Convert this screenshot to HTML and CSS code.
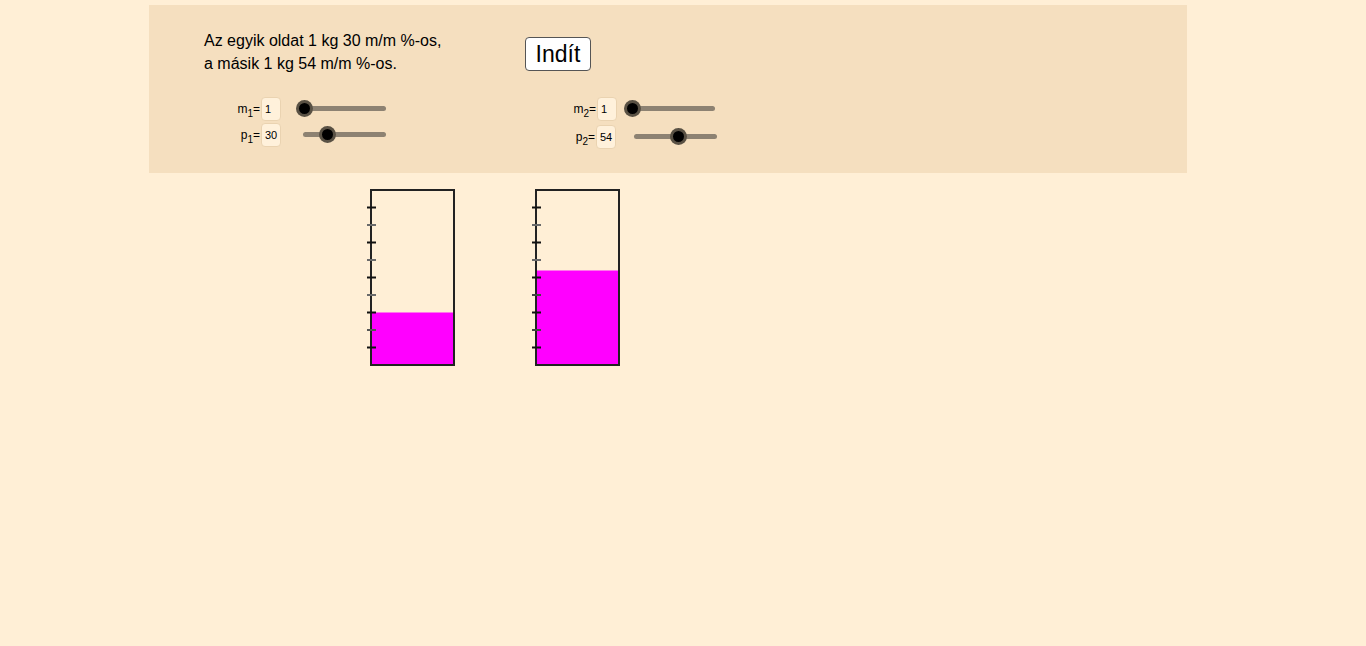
FILE: index.html
```html
<!DOCTYPE html>
<html>

<head>
    <title>Keverés</title>
    <meta name="viewport" content="width=device-width, initial-scale=1">
    <link rel="stylesheet" href="styles.css">
</head>

<body>
    <div class="applet">
        <div class="panel">
            <div class="topRow">
                <p class="intro">Az egyik oldat 1 kg 30 m/m %-os,<br>a másik 1 kg 54 m/m %-os.</p>
                <button class="start">Indít</button>
            </div>
            <div class="controls">
                <div class="group">
                    <div class="row">
                        <span class="label">m<sub>1</sub>=</span>
                        <span class="box">1</span>
                        <span class="track mTrack"><span class="knob" style="left: -4px"></span></span>
                    </div>
                    <div class="row">
                        <span class="label">p<sub>1</sub>=</span>
                        <span class="box">30</span>
                        <span class="track pTrack"><span class="knob" style="left: 16px"></span></span>
                    </div>
                </div>
                <div class="group second">
                    <div class="row">
                        <span class="label">m<sub>2</sub>=</span>
                        <span class="box">1</span>
                        <span class="track mTrack2"><span class="knob" style="left: -5px"></span></span>
                    </div>
                    <div class="row">
                        <span class="label shift">p<sub>2</sub>=</span>
                        <span class="box">54</span>
                        <span class="track pTrack2"><span class="knob" style="left: 36px"></span></span>
                    </div>
                </div>
            </div>
        </div>

        <div class="stage">
            <!-- 1. oldat: 30 % -->
            <svg class="beaker" width="92" height="180" viewBox="0 0 92 180">
                <rect x="7" y="124.5" width="82" height="52.5" fill="#ff00ff" />
                <rect x="6" y="2" width="83" height="175" fill="none" stroke="#222" stroke-width="2" />
                <g stroke-width="2">
                    <line x1="2" y1="19.5" x2="11" y2="19.5" stroke="#111" />
                    <line x1="2" y1="37" x2="11" y2="37" stroke="#6a6a6a" />
                    <line x1="2" y1="54.5" x2="11" y2="54.5" stroke="#111" />
                    <line x1="2" y1="72" x2="11" y2="72" stroke="#6a6a6a" />
                    <line x1="2" y1="89.5" x2="11" y2="89.5" stroke="#111" />
                    <line x1="2" y1="107" x2="11" y2="107" stroke="#6a6a6a" />
                    <line x1="2" y1="124.5" x2="11" y2="124.5" stroke="#111" />
                    <line x1="2" y1="142" x2="11" y2="142" stroke="#555" />
                    <line x1="2" y1="159.5" x2="11" y2="159.5" stroke="#111" />
                </g>
            </svg>
            <!-- 2. oldat: 54 % -->
            <svg class="beaker" width="92" height="180" viewBox="0 0 92 180">
                <rect x="7" y="82.5" width="82" height="94.5" fill="#ff00ff" />
                <rect x="6" y="2" width="83" height="175" fill="none" stroke="#222" stroke-width="2" />
                <g stroke-width="2">
                    <line x1="2" y1="19.5" x2="11" y2="19.5" stroke="#111" />
                    <line x1="2" y1="37" x2="11" y2="37" stroke="#6a6a6a" />
                    <line x1="2" y1="54.5" x2="11" y2="54.5" stroke="#111" />
                    <line x1="2" y1="72" x2="11" y2="72" stroke="#6a6a6a" />
                    <line x1="2" y1="89.5" x2="11" y2="89.5" stroke="#111" />
                    <line x1="2" y1="107" x2="11" y2="107" stroke="#444" />
                    <line x1="2" y1="124.5" x2="11" y2="124.5" stroke="#111" />
                    <line x1="2" y1="142" x2="11" y2="142" stroke="#444" />
                    <line x1="2" y1="159.5" x2="11" y2="159.5" stroke="#111" />
                </g>
            </svg>
        </div>
    </div>
</body>

</html>
```

FILE: styles.css
```css
* {
    box-sizing: border-box
}

body {
    font-family: "Liberation Sans", Arial, sans-serif;
    margin: 0;
    background: #ffefd6;
    min-height: 646px;
}

.applet {
    margin-left: 149px;
    padding-top: 5px;
    width: 1038px;
}

.panel {
    height: 168px;
    background: #f5dfbf;
    padding: 24px 0 0 55px;
}

.topRow {
    display: flex;
}

.intro {
    margin: 0;
    width: 321px;
    font-size: 16px;
    line-height: 23px;
    color: #000;
}

.start {
    margin-top: 8px;
    height: 34px;
    width: 66px;
    padding: 0;
    font-family: "Liberation Sans", Arial, sans-serif;
    font-size: 23px;
    color: #000;
    background: #fff;
    border: 1px solid #555;
    border-radius: 4px;
}

.controls {
    display: flex;
    margin-top: 22px;
}

.group {
    width: 336px;
    display: flex;
    flex-direction: column;
    gap: 3px;
}

.group.second {
    gap: 5px;
}

.row {
    display: flex;
    align-items: center;
    height: 23px;
}

.label {
    width: 57px;
    padding-right: 1px;
    text-align: right;
    font-size: 12px;
    color: #000;
}

.label.shift {
    width: 56px;
}

.label sub {
    font-size: 10px;
    vertical-align: -4px;
    line-height: 0;
}

.box {
    width: 20px;
    height: 24px;
    line-height: 22px;
    padding-left: 3px;
    font-size: 11px;
    background: #fff1db;
    border: 1px solid #ead3b1;
    border-radius: 4px;
}

.track {
    position: relative;
    height: 5px;
    border-radius: 3px;
    background: #8d8272;
}

.mTrack {
    margin-left: 19px;
    width: 86px;
}

.pTrack {
    margin-left: 22px;
    width: 83px;
}

.mTrack2 {
    margin-left: 12px;
    width: 86px;
}

.pTrack2 {
    margin-left: 18px;
    width: 83px;
}

.knob {
    position: absolute;
    top: -6px;
    width: 17px;
    height: 17px;
    border-radius: 50%;
    background: #000;
    border: 3px solid rgba(105, 95, 80, .85);
}

.stage {
    display: flex;
    gap: 73px;
    padding-left: 216px;
    margin-top: 15px;
}

.beaker {
    display: block;
}
```
